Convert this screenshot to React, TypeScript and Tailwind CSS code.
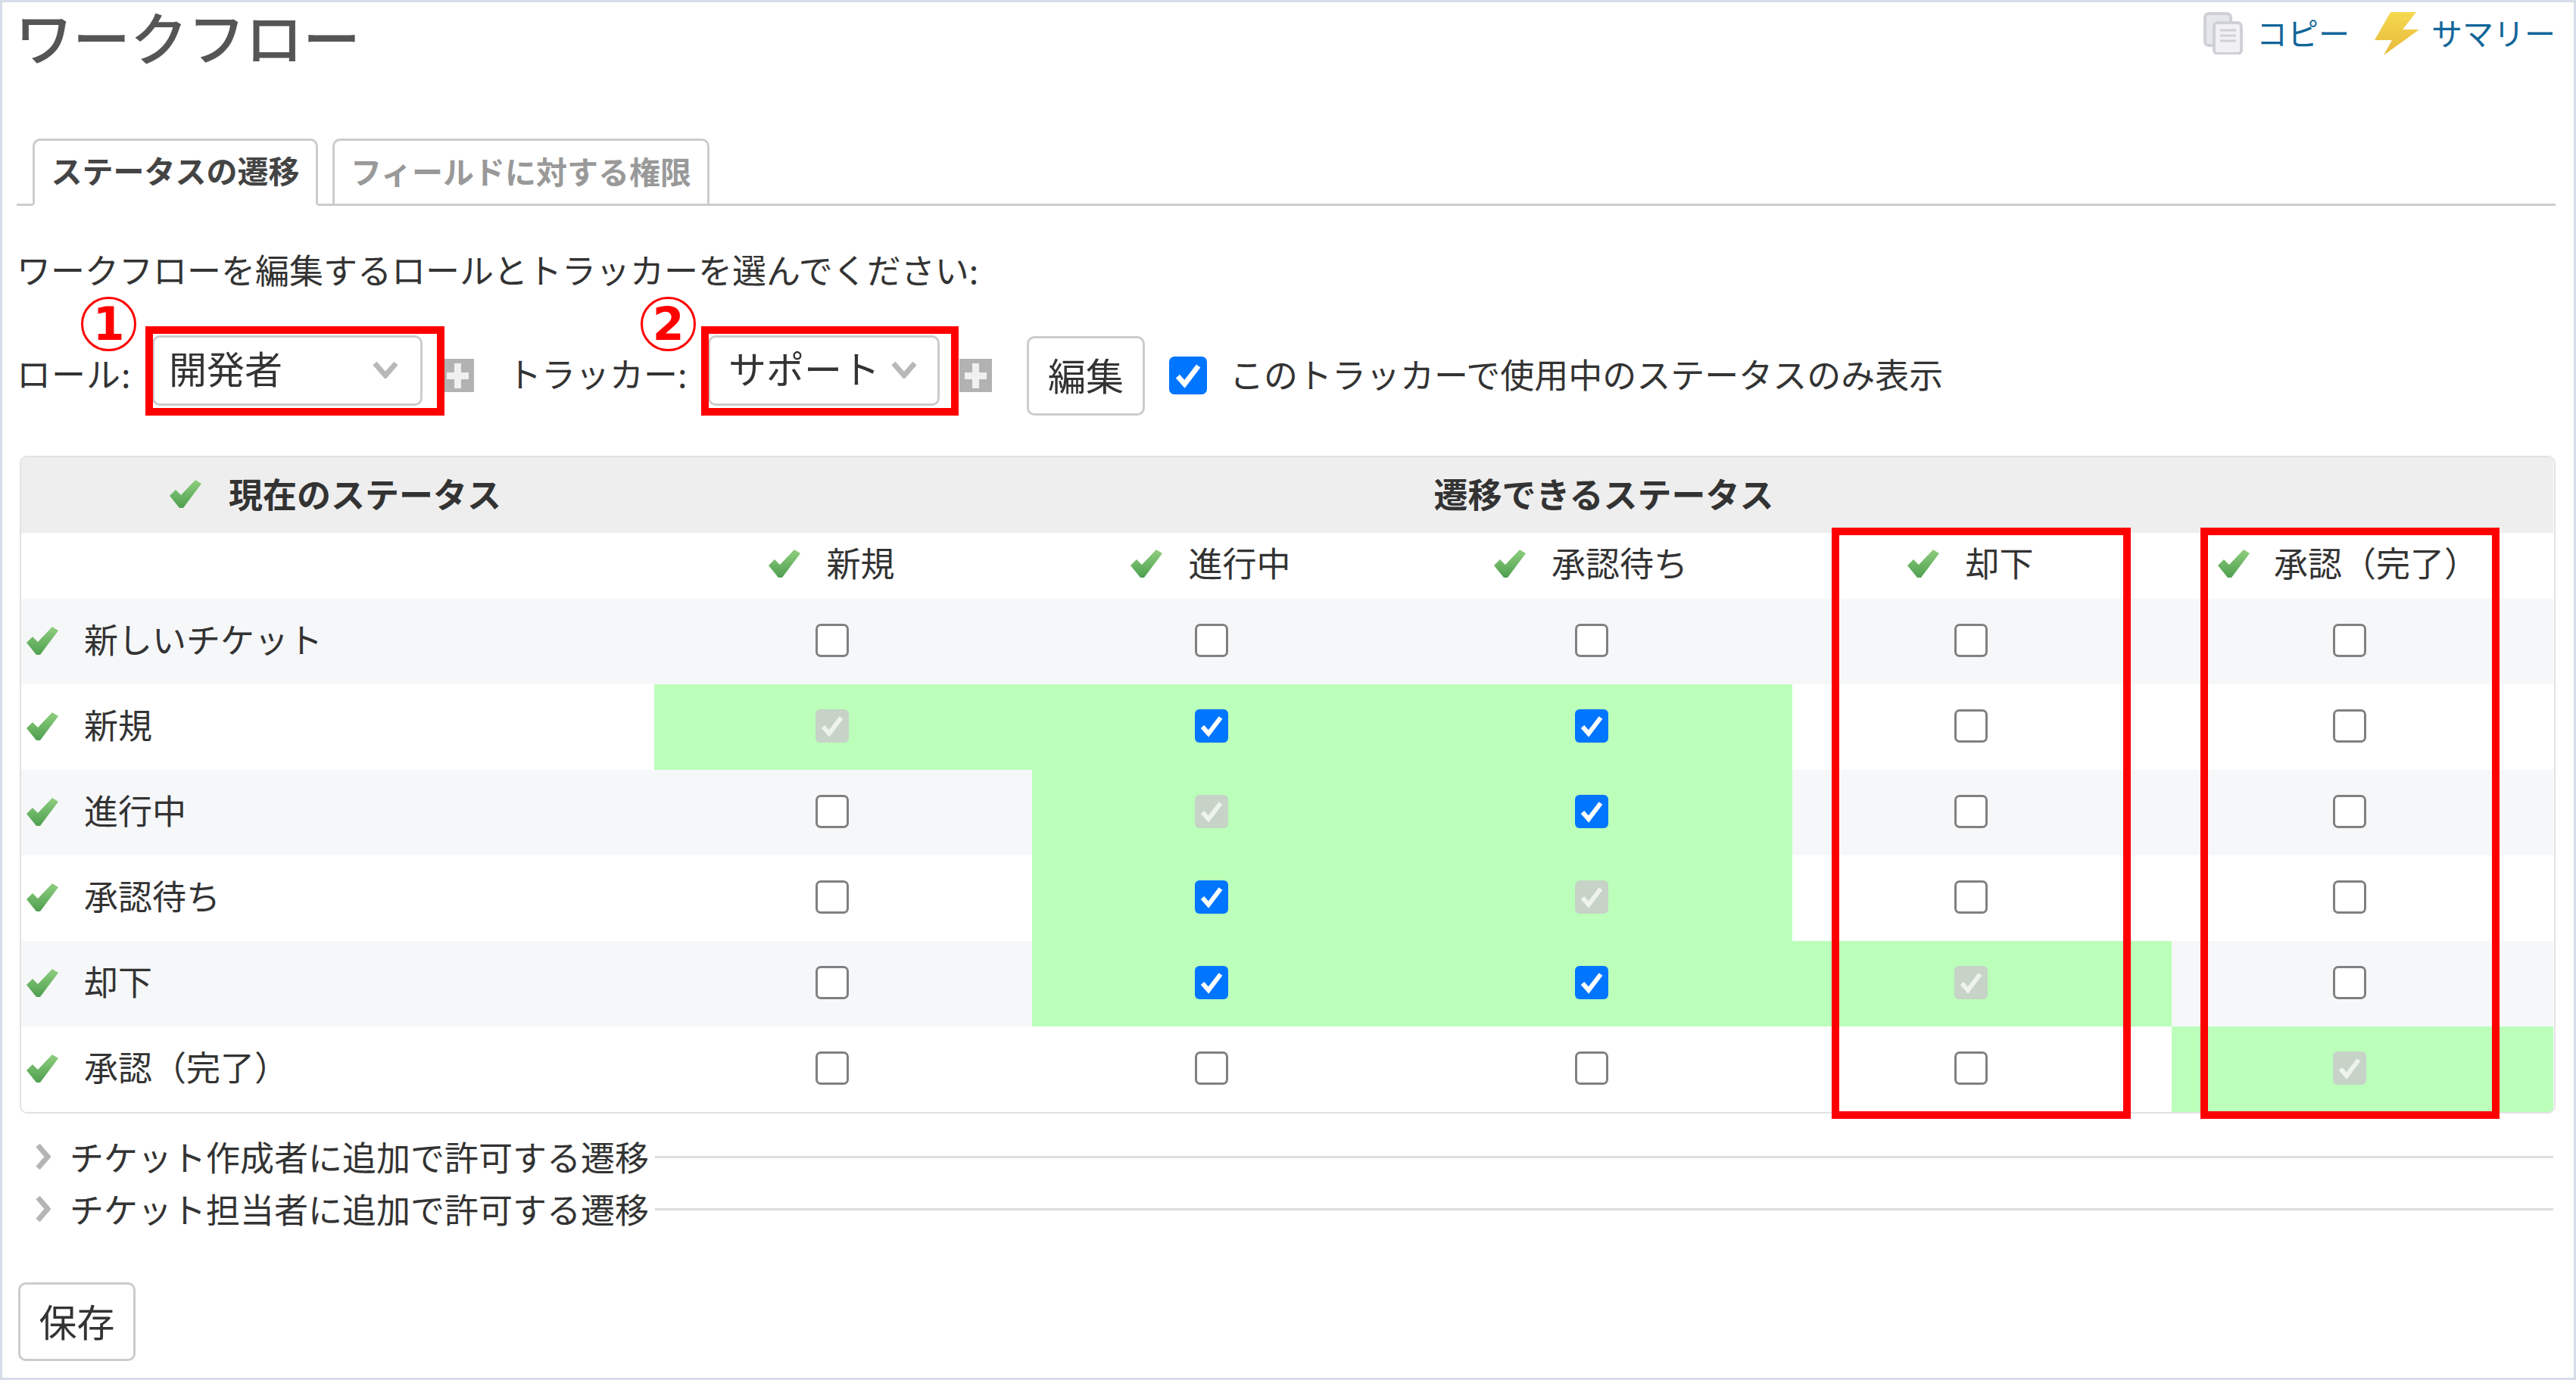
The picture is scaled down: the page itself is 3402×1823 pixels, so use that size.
import { useId } from 'react';

const STATUSES = ['新規', '進行中', '承認待ち', '却下', '承認（完了）'];

interface RowConfig {
  label: string;
  enabled: number[];
  checked: number[];
  disabled: number[];
}

const ROWS: RowConfig[] = [
  { label: '新しいチケット', enabled: [], checked: [], disabled: [] },
  { label: '新規', enabled: [0, 1, 2], checked: [1, 2], disabled: [0] },
  { label: '進行中', enabled: [1, 2], checked: [2], disabled: [1] },
  { label: '承認待ち', enabled: [1, 2], checked: [1], disabled: [2] },
  { label: '却下', enabled: [1, 2, 3], checked: [1, 2], disabled: [3] },
  { label: '承認（完了）', enabled: [4], checked: [], disabled: [4] },
];

function GreenCheck() {
  const id = useId();
  return (
    <svg width="42" height="37" viewBox="0 0 42 37" className="shrink-0">
      <defs>
        <linearGradient id={id} x1="0" y1="0" x2="0" y2="1">
          <stop offset="0" stopColor="#8fcf7f" />
          <stop offset="1" stopColor="#4e9f50" />
        </linearGradient>
      </defs>
      <path d="M0 21 L8 13 L15 20 L34 0 L42 5 L18 37 L13 37 Z" fill={`url(#${id})`} />
    </svg>
  );
}

function Tick({ color }: { color: string }) {
  return (
    <svg width="100%" height="100%" viewBox="0 0 44 44">
      <path d="M10 23 L18 32 L34 11" fill="none" stroke={color} strokeWidth="6" />
    </svg>
  );
}

function Checkbox({ checked, disabled }: { checked: boolean; disabled: boolean }) {
  if (disabled) {
    return (
      <span className="block h-[44px] w-[44px] rounded-[6px] bg-[#c6d3c6]">
        <Tick color="#eef3ee" />
      </span>
    );
  }
  if (checked) {
    return (
      <span className="block h-[44px] w-[44px] rounded-[6px] bg-[#0075ff]">
        <Tick color="#ffffff" />
      </span>
    );
  }
  return <span className="block h-[44px] w-[44px] rounded-[7px] border-[3px] border-[#808080] bg-white" />;
}

function PlusIcon({ className }: { className: string }) {
  return (
    <span className={`flex h-[44px] shrink-0 items-center justify-center bg-[#b2b2b2] ${className}`}>
      <svg width="29" height="35" viewBox="0 0 29 35">
        <path d="M14.5 1 V34 M0 17.5 H29" stroke="#f0f0f0" strokeWidth="9" />
      </svg>
    </span>
  );
}

function Chevron() {
  return (
    <svg width="34" height="22" viewBox="0 0 34 22" className="shrink-0">
      <path d="M3 2 L17 18 L31 2" fill="none" stroke="#b8b8b8" strokeWidth="7" />
    </svg>
  );
}

function Collapsed({ label, className }: { label: string; className: string }) {
  return (
    <div className={`flex h-[60px] items-center pl-[24px] pr-[3px] ${className}`}>
      <svg width="21" height="34" viewBox="0 0 21 34" className="mr-[25px] shrink-0">
        <path d="M4 2 L17 17 L4 32" fill="none" stroke="#b5b5b5" strokeWidth="7" />
      </svg>
      <span className="leading-[60px]">{label}</span>
      <span className="ml-[8px] h-[3px] flex-1 bg-[#dddddd]" />
    </div>
  );
}

function CopyIcon() {
  return (
    <svg width="52" height="56" viewBox="0 0 52 56" className="mr-[18px] shrink-0">
      <rect x="2" y="2" width="34" height="42" rx="5" fill="#e6e7ea" stroke="#cfd1d6" strokeWidth="4" />
      <rect x="14" y="14" width="36" height="41" rx="5" fill="#f1f1f3" stroke="#cfd1d6" strokeWidth="4" />
      <path d="M22 24 H43 M22 31 H43 M22 38 H43" stroke="#cfd1d6" strokeWidth="3" />
    </svg>
  );
}

function BoltIcon() {
  const id = useId();
  return (
    <svg width="60" height="58" viewBox="0 0 60 58" className="ml-[32px] mr-[16px] shrink-0">
      <defs>
        <linearGradient id={id} x1="0" y1="0" x2="0" y2="1">
          <stop offset="0" stopColor="#f5d94e" />
          <stop offset="1" stopColor="#e8b93c" />
        </linearGradient>
      </defs>
      <path d="M22 1 H56 L38 24 H60 L13 58 L24 38 H1 Z" fill={`url(#${id})`} />
    </svg>
  );
}

function RedBox({ className }: { className: string }) {
  return <div className={`pointer-events-none absolute border-[10px] border-[#ff0000] ${className}`} />;
}

function Badge({ n, className }: { n: string; className: string }) {
  return (
    <div
      className={`absolute top-[392px] flex h-[72px] w-[73px] items-center justify-center rounded-full border-[3px] border-[#ff0000] font-['DejaVu_Sans',sans-serif] text-[60px] font-bold leading-none text-[#ff0000] ${className}`}
    >
      {n}
    </div>
  );
}

export default function App() {
  return (
    <div className="relative h-[1823px] w-[3402px] overflow-hidden bg-white pl-[22px] pr-[27px] font-['Noto_Sans_CJK_JP','Liberation_Sans',sans-serif] text-[45px] text-[#333333] shadow-[inset_0_0_0_3px_#d6dce8]">
      {/* header */}
      <div className="flex h-[183px] items-start justify-between">
        <h2 className="-ml-[2px] text-[76px] font-medium leading-[94px] text-[#555555]">ワークフロー</h2>
        <div className="mt-[14px] flex items-center text-[41px] leading-[56px] text-[#116699]">
          <CopyIcon />
          <span className="pb-[3px]">コピー</span>
          <BoltIcon />
          <span className="pb-[3px]">サマリー</span>
        </div>
      </div>

      {/* tabs */}
      <div className="flex h-[89px] items-end border-b-[3px] border-[#cccccc] text-[41px] font-bold">
        <div className="relative z-10 -mb-[3px] ml-[21px] flex h-[89px] w-[377px] items-center justify-center rounded-t-[10px] border-[3px] border-[#cccccc] border-b-white bg-white pb-[6px] text-[#444444]">
          ステータスの遷移
        </div>
        <div className="ml-[19px] flex h-[86px] w-[498px] items-center justify-center rounded-t-[10px] border-[3px] border-b-0 border-[#cccccc] pb-[4px] text-[#999999]">
          フィールドに対する権限
        </div>
      </div>

      <p className="mt-[54px] leading-[60px]">ワークフローを編集するロールとトラッカーを選んでください:</p>

      {/* role / tracker form */}
      <div className="mt-[54px] flex h-[112px] items-center">
        <span className="mb-[6px] w-[179px] shrink-0 leading-[60px] tracking-[1px]">ロール:</span>
        <div className="mb-[13px] flex h-[93px] w-[357px] shrink-0 items-center justify-between rounded-[10px] border-[3px] border-[#cccccc] pb-[2px] pl-[19px] pr-[29px] text-[50px]">
          <span className="pb-[6px]">開発者</span>
          <Chevron />
        </div>
        <PlusIcon className="ml-[25px] w-[43px]" />
        <span className="mb-[6px] ml-[44px] w-[265px] shrink-0 leading-[60px]">トラッカー:</span>
        <div className="mb-[13px] flex h-[93px] w-[306px] shrink-0 items-center justify-between rounded-[10px] border-[3px] border-[#cccccc] pb-[2px] pl-[24px] pr-[27px] text-[50px]">
          <span className="pb-[6px]">サポート</span>
          <Chevron />
        </div>
        <PlusIcon className="ml-[26px] w-[43px]" />
        <button className="ml-[46px] h-[105px] w-[156px] shrink-0 rounded-[10px] border-[3px] border-[#cccccc] bg-white pb-[4px] text-[50px]">
          編集
        </button>
        <span className="ml-[32px] h-[50px] w-[50px] shrink-0 rounded-[7px] bg-[#0075ff]">
          <Tick color="#ffffff" />
        </span>
        <span className="mb-[4px] ml-[30px] leading-[60px]">このトラッカーで使用中のステータスのみ表示</span>
      </div>

      {/* workflow table */}
      <div className="ml-[4px] mt-[50px] overflow-hidden rounded-[10px] border-2 border-[#e2e2e2]">
        <table className="w-[3344px] table-fixed border-collapse">
          <colgroup>
            <col className="w-[836px]" />
            <col className="w-[499px]" />
            <col className="w-[502px]" />
            <col className="w-[502px]" />
            <col className="w-[501px]" />
            <col className="w-[504px]" />
          </colgroup>
          <thead>
            <tr className="h-[100px] bg-[#eeeeee]">
              <th className="p-0 pb-[4px] font-bold">
                <div className="flex items-center pl-[196px]">
                  <GreenCheck />
                  <span className="ml-[36px]">現在のステータス</span>
                </div>
              </th>
              <th colSpan={5} className="p-0 pb-[4px] font-bold">
                遷移できるステータス
              </th>
            </tr>
            <tr className="h-[87px]">
              <th className="p-0" />
              {STATUSES.map((status, colIndex) => (
                <th key={status} className={`p-0 pb-[6px] font-normal ${colIndex === 4 ? 'pr-[38px]' : 'pr-[30px]'}`}>
                  <div className="flex items-center justify-center">
                    <GreenCheck />
                    <span className={`whitespace-nowrap pb-[4px] ${colIndex === 4 ? 'ml-[32px]' : 'ml-[34px]'}`}>{status}</span>
                  </div>
                </th>
              ))}
            </tr>
          </thead>
          <tbody>
            {ROWS.map((row, rowIndex) => (
              <tr key={row.label} className={`h-[113px] ${rowIndex % 2 === 0 ? 'bg-[#f6f7f9]' : 'bg-white'}`}>
                <td className="p-0 pb-[3px]">
                  <div className="flex items-center pl-[7px]">
                    <GreenCheck />
                    <span className="ml-[34px] pb-[4px] leading-[60px]">{row.label}</span>
                  </div>
                </td>
                {STATUSES.map((status, colIndex) => (
                  <td key={status} className={`p-0 pb-[3px] ${row.enabled.includes(colIndex) ? 'bg-[#bbffbb]' : ''}`}>
                    <div className={`flex justify-center ${colIndex === 4 ? 'pr-[34px]' : 'pr-[29px]'}`}>
                      <Checkbox
                        checked={row.checked.includes(colIndex)}
                        disabled={row.disabled.includes(colIndex)}
                      />
                    </div>
                  </td>
                ))}
              </tr>
            ))}
          </tbody>
        </table>
      </div>

      <Collapsed label="チケット作成者に追加で許可する遷移" className="mt-[27px]" />
      <Collapsed label="チケット担当者に追加で許可する遷移" className="mt-[9px]" />

      <button className="ml-[2px] mt-[67px] block h-[104px] w-[155px] rounded-[10px] border-[3px] border-[#cccccc] bg-white pb-[4px] text-[50px]">
        保存
      </button>

      {/* red annotations */}
      <Badge n="1" className="left-[107px]" />
      <Badge n="2" className="left-[846px]" />
      <RedBox className="left-[192px] top-[431px] h-[118px] w-[395px]" />
      <RedBox className="left-[926px] top-[431px] h-[118px] w-[340px]" />
      <RedBox className="left-[2419px] top-[697px] h-[781px] w-[395px]" />
      <RedBox className="left-[2906px] top-[697px] h-[781px] w-[395px]" />
    </div>
  );
}
